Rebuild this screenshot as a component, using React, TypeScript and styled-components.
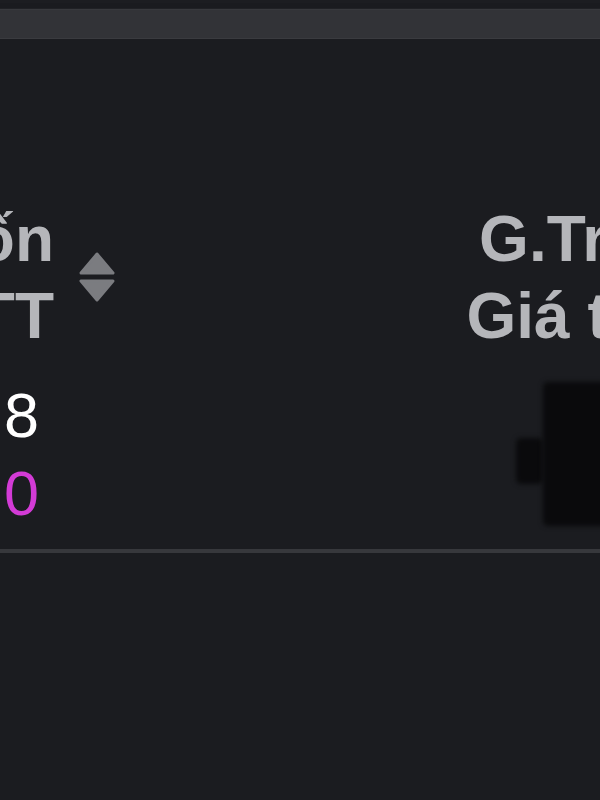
import React from "react";
import styled, { createGlobalStyle } from "styled-components";

const GlobalStyle = createGlobalStyle`
  html, body {
    margin: 0;
    padding: 0;
    background: #1b1c20;
    overflow: hidden;
  }
  body {
    font-family: "Liberation Sans", Arial, Helvetica, sans-serif;
  }
`;

const Screen = styled.div`
  width: 600px;
  height: 800px;
  overflow: hidden;
  background: #1b1c20;
  display: flex;
  flex-direction: column;
`;

const StatusStrip = styled.div`
  height: 9px;
  box-sizing: border-box;
  background: #1a1b1f;
  border-top: 3px solid #1c1d21;
  border-bottom: 1px solid #202125;
`;

const SearchBar = styled.div`
  height: 30px;
  box-sizing: border-box;
  background: #323337;
  border-top: 1px solid #38393d;
  border-bottom: 1px solid #3a3b3f;
`;

const Table = styled.div`
  margin-top: 162px;
  margin-left: -150px;
  width: 900px;
  display: grid;
  grid-template-columns: 204px 70px 1fr 300px;
  row-gap: 21px;
`;

const HeadCell = styled.div<{ $align: "right" | "center" }>`
  display: flex;
  flex-direction: column;
  align-items: ${(p) => (p.$align === "right" ? "flex-end" : "center")};
  color: #b5b6ba;
  font-weight: 700;
  font-size: 64px;
  line-height: 77px;
  white-space: nowrap;
`;

const HeadLine = styled.span<{ $shift?: number }>`
  margin-left: ${(p) => (p.$shift ? `${p.$shift}px` : "0")};
`;

const SortCell = styled.div`
  display: flex;
  align-items: center;
  padding-left: 25px;
`;

const Spacer = styled.div``;

const ValueCell = styled.div`
  display: flex;
  flex-direction: column;
  align-items: flex-end;
  padding-right: 15px;
  font-size: 63px;
  line-height: 78px;
  font-weight: 400;
  white-space: nowrap;
`;

const Value = styled.span<{ $tone: "plain" | "accent" }>`
  color: ${(p) => (p.$tone === "accent" ? "#d33bd6" : "#ffffff")};
`;

const MaskCell = styled.div`
  display: flex;
  align-items: center;
  padding-left: 66px;
`;

const MaskPiece = styled.div<{ $w: number; $h: number; $drop?: number }>`
  width: ${(p) => p.$w}px;
  height: ${(p) => p.$h}px;
  margin-top: ${(p) => (p.$drop ? `${p.$drop}px` : "0")};
  background: #0a0a0c;
  border-radius: 5px;
  filter: blur(2.5px);
`;

const Divider = styled.div`
  margin-top: 17px;
  height: 4px;
  background: #37383c;
`;

const SortIcon = () => (
  <svg width="36" height="52" viewBox="0 0 36 52" fill="#7b7c80">
    <polygon
      points="18,2 34,21 2,21"
      stroke="#7b7c80"
      strokeWidth="3"
      strokeLinejoin="round"
    />
    <polygon
      points="2,29 34,29 18,48"
      stroke="#7b7c80"
      strokeWidth="3"
      strokeLinejoin="round"
    />
  </svg>
);

export default function App() {
  return (
    <>
      <GlobalStyle />
      <Screen>
        <StatusStrip />
        <SearchBar />
        <Table>
          <HeadCell $align="right">
            <HeadLine>Giá vốn</HeadLine>
            <HeadLine>Giá TT</HeadLine>
          </HeadCell>
          <SortCell>
            <SortIcon />
          </SortCell>
          <Spacer />
          <HeadCell $align="center">
            <HeadLine>G.Trị TT</HeadLine>
            <HeadLine $shift={14}>Giá trị TT</HeadLine>
          </HeadCell>

          <ValueCell>
            <Value $tone="plain">12.8</Value>
            <Value $tone="accent">13.0</Value>
          </ValueCell>
          <Spacer />
          <Spacer />
          <MaskCell>
            <MaskPiece $w={27} $h={46} $drop={14} />
            <MaskPiece $w={100} $h={144} />
          </MaskCell>
        </Table>
        <Divider />
      </Screen>
    </>
  );
}
